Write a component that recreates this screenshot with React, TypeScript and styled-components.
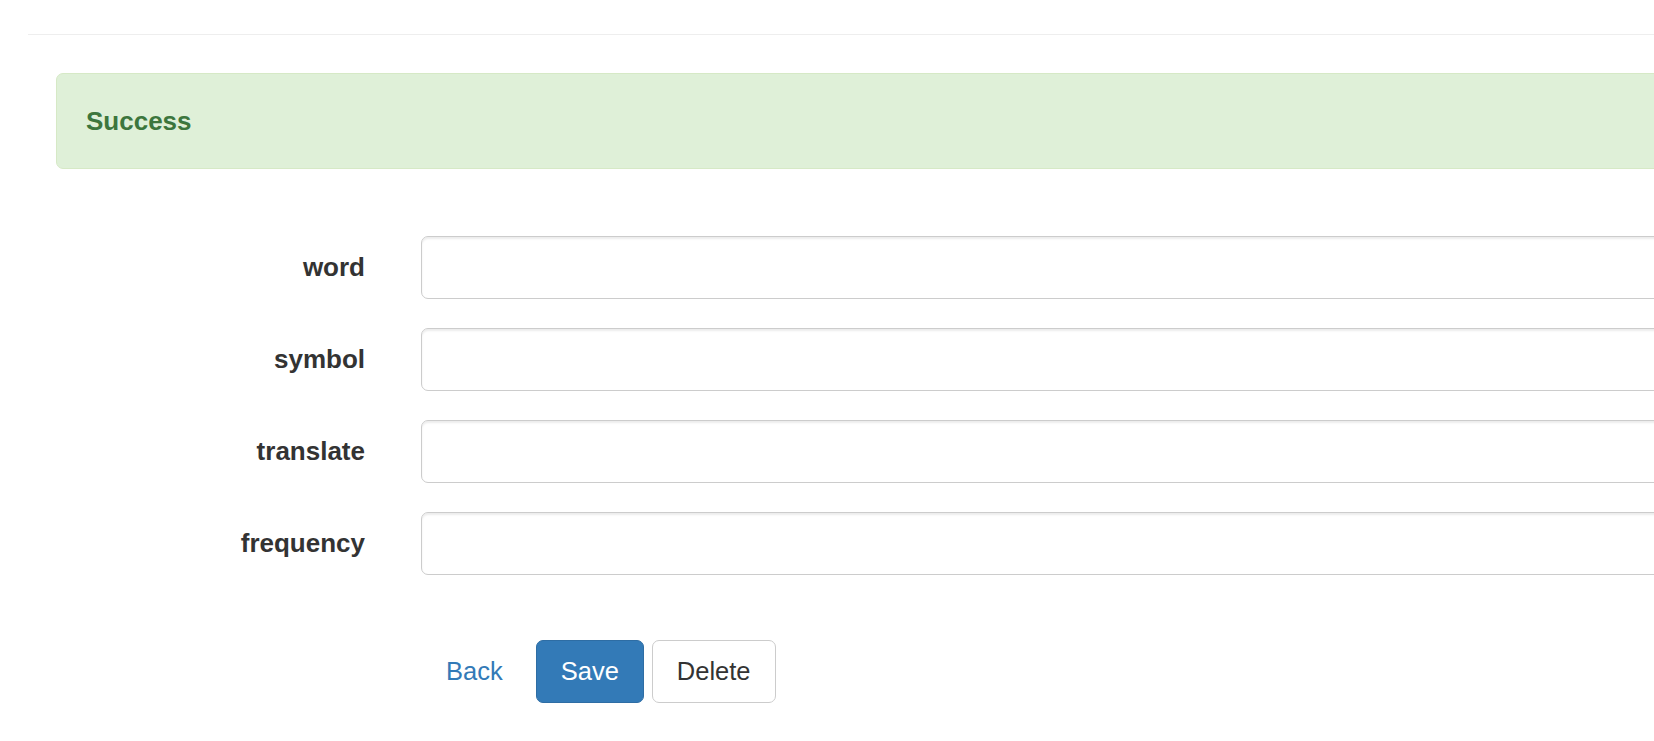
import React from "react";
import styled, { createGlobalStyle } from "styled-components";

const GlobalStyle = createGlobalStyle`
  html, body {
    margin: 0;
    padding: 0;
    background: #ffffff;
    overflow: hidden;
  }
  body {
    font-family: "Liberation Sans", Arial, Helvetica, sans-serif;
    color: #333333;
  }
  * { box-sizing: border-box; }
`;

const Page = styled.div`
  width: 1760px;
  padding: 34px 0 0 28px;
`;

const Rule = styled.hr`
  margin: 0;
  border: 0;
  border-top: 1px solid #eeeeee;
  height: 1px;
`;

const Content = styled.div`
  padding: 38px 0 0 28px;
`;

const Alert = styled.div`
  height: 96px;
  background: #dff0d8;
  border: 1px solid #d6e9c6;
  border-radius: 7px;
  padding: 0 28px;
  display: flex;
  align-items: center;
`;

const AlertTitle = styled.h4`
  margin: 0 0 0 1px;
  font-size: 26px;
  font-weight: 700;
  color: #3c763d;
`;

const Form = styled.form`
  margin-top: 67px;
  display: grid;
  grid-template-columns: 309px 1fr;
  column-gap: 56px;
  row-gap: 29px;
`;

const Label = styled.label`
  display: flex;
  align-items: center;
  justify-content: flex-end;
  font-size: 26px;
  font-weight: 700;
  color: #333333;
`;

const Input = styled.input`
  height: 63px;
  width: 100%;
  border: 1px solid #cccccc;
  border-radius: 7px;
  box-shadow: inset 0 2px 2px rgba(0, 0, 0, 0.075);
  font-size: 25.5px;
  font-family: inherit;
  padding: 0 22px;
  outline: none;
`;

const Actions = styled.div`
  grid-column: 2;
  margin-top: 36px;
  display: flex;
  gap: 8px;
`;

const Button = styled.button<{ $variant: "link" | "primary" | "default" }>`
  height: 63px;
  padding: 0 24px;
  font-family: inherit;
  font-size: 25.5px;
  border-radius: 7px;
  cursor: pointer;
  border: 1px solid
    ${(p) =>
      p.$variant === "primary"
        ? "#2e6da4"
        : p.$variant === "default"
        ? "#cccccc"
        : "transparent"};
  background: ${(p) => (p.$variant === "primary" ? "#337ab7" : "#ffffff")};
  color: ${(p) =>
    p.$variant === "primary"
      ? "#ffffff"
      : p.$variant === "link"
      ? "#337ab7"
      : "#333333"};
`;

const fields = ["word", "symbol", "translate", "frequency"];

export default function App() {
  return (
    <>
      <GlobalStyle />
      <Page>
        <Rule />
        <Content>
          <Alert>
            <AlertTitle>Success</AlertTitle>
          </Alert>
          <Form onSubmit={(e) => e.preventDefault()}>
            {fields.map((f) => (
              <React.Fragment key={f}>
                <Label htmlFor={f}>{f}</Label>
                <Input id={f} type="text" />
              </React.Fragment>
            ))}
            <Actions>
              <Button type="button" $variant="link">Back</Button>
              <Button type="submit" $variant="primary">Save</Button>
              <Button type="button" $variant="default">Delete</Button>
            </Actions>
          </Form>
        </Content>
      </Page>
    </>
  );
}
